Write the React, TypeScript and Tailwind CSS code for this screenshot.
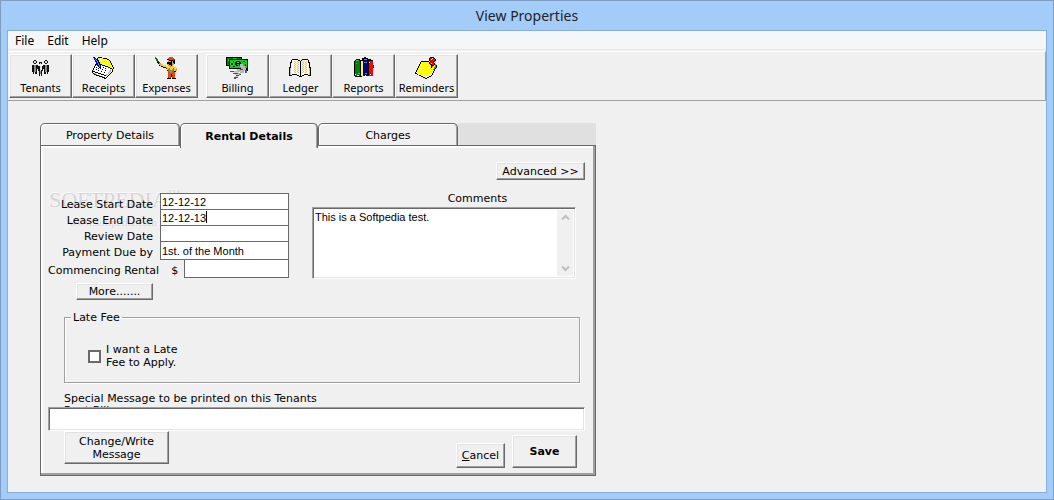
import { useState } from "react";
import type { ReactNode } from "react";
import clsx from "clsx";

const raised =
  "border border-t-white border-l-white border-r-[#696969] border-b-[#696969] bg-[#f0f0f0] shadow-[inset_-1px_-1px_#a0a0a0,inset_1px_1px_#e3e3e3]";
const sunken =
  "border border-t-[#a0a0a0] border-l-[#a0a0a0] border-r-white border-b-white bg-white shadow-[inset_1px_1px_#696969,inset_-1px_-1px_#e3e3e3]";
const fieldText = "font-['Liberation_Sans',sans-serif] text-[11px] text-black outline-none";

function Icon({ children }: { children: ReactNode }) {
  return (
    <svg
      className="h-6 w-[25px]"
      viewBox="0 0 25 24"
      shapeRendering="crispEdges"
      aria-hidden="true"
    >
      {children}
    </svg>
  );
}

// 16-colour style bitmaps, one letter per pixel
const palette: Record<string, string> = {
  k: "#000000",
  w: "#ffffff",
  y: "#ffff00",
  o: "#808000",
  g: "#808080",
  s: "#c0c0c0",
  b: "#0000d0",
  c: "#00b0f0",
  r: "#ff0000",
  e: "#e8480c",
  t: "#d29a5c",
  n: "#1c5c1c",
  a: "#f8d820",
  m: "#689a8c",
  p: "#fff4c8",
};

function PixelIcon({ rows }: { rows: string[] }) {
  return (
    <Icon>
      {rows.flatMap((row, y) =>
        row
          .split("")
          .map((ch, x) =>
            palette[ch] ? (
              <rect key={`${x}-${y}`} x={x + 1} y={y + 1} width="1" height="1" fill={palette[ch]} />
            ) : null
          )
      )}
    </Icon>
  );
}

const receiptRows = [
  ".bk...kkkk............",
  "..bb.kyywyykkkk.......",
  "..bcbkyyyyywyyykk.....",
  "...bcbkywyyyyyyyyk....",
  "...bbckyyyyyywyyyyk...",
  "....bcbkyyywyyyyyyk...",
  "....bbckyyyyyyywyyyk..",
  "...kkbcbkkyywyyyyyyk..",
  "...kwbbckwkkkyyywyyyk.",
  "..kwwwbcbwwwwkkkyyyyk.",
  "..kwkwwbkwwkwwwwkkyyyk",
  ".kwwwwkwkwwwwkwwwwkkyk",
  ".kwwkwwwwwkwwwwwwwswk.",
  "kwwwwwkwwwwwwkwwwwswk.",
  "kkkwwwwwwkwwwwwwwsswk.",
  "kwwkkkwwwwwwkwwwsswk..",
  ".kgwwwkkkwwwwwwwswk...",
  "..kkgwwwwkkkwwsswk....",
  "....kkkgwwwwkkswk.....",
  ".......kkkgwwwwk......",
  "..........kkkwk.......",
  "............kk........",
];

const expenseRows = [
  "n.............eeee....",
  "nn...........eeeeee...",
  ".nn.........kkeeeerr..",
  ".nn..........tkkkkrk..",
  "..nn.........tttktkk..",
  "..kkn.......kkkkktkk..",
  "...ktt......kkkkkttk..",
  "....ttaa....ttkkktt...",
  "....kttaaaa..tttkt....",
  "......kkaaaaaaattaa...",
  "........kkkaaaaaaaaaa.",
  "...........kaaeaaaeaat",
  "............aeeaameaat",
  "............kemmmmeatt",
  ".............emmmeekk.",
  ".............eemmeee..",
  ".............eeeeeee..",
  ".............eeekeee..",
  ".............eeekree..",
  ".............eeekeee..",
  ".............ree.ree..",
  "............kkkk.kkkk.",
];

const ledgerRows = [
  "......................",
  "......................",
  "...kkkkkk....kkkkkk...",
  "..kwpppppkk.kpppppwk..",
  "..kwpsppsppkppsppswk..",
  ".kkwppsppspkpsppspwkk.",
  ".kpwpsppsppkppsppswpk.",
  ".kpwppsppspkpsppspwpk.",
  ".kpwpsppsppkppsppswpk.",
  ".kpwppsppspkpsppspwpk.",
  "kkpwpsppsppkppsppswpkk",
  "kspwppsppspkpsppspwpsk",
  "kspwpsppsppkppsppswpsk",
  "kspwppsppspkpsppspwpsk",
  "kspwpsppsppkppsppswpsk",
  "kspwppsppspkpsppspwpsk",
  "kspwwwwwpppkpppwwwwpsk",
  "kswkkkkkwwpkpwwkkkkwsk",
  "kkk.....kkwkwkk....kkk",
  "..........kkk.........",
];

const reminderRows = [
  "...............kkkk...",
  "..............krrwrk..",
  "..............krwrrrk.",
  "..............krrrrrk.",
  "......kkkkkkkk.kkrkk..",
  ".....kyyyyyyyykrrrk...",
  ".....kyywyyyyykrwrrk..",
  "....kyyyyyyyyyykkrrko.",
  "....kywyyyyyyyyykkkyok",
  "...kyyyyyyyyyyyykoyyok",
  "...kyyyyyyyyyyyykyyook",
  "..kyywyyyyyyyyyyyyyok.",
  "..kyyyyyyyyyyyyyyyok..",
  ".kyywyyyyyyyyyyyyywk..",
  ".kyyyyyyyyyyyyyyyyk...",
  "kwyyyyyyyyyyyyyyywk...",
  "kkwyyyyyyyyyyyyyyk....",
  "..kwwyyyyyyyyyywwk....",
  "....kkwyyyyyyywwk.....",
  "......kkwwywwwkk......",
  "........kkwwkk........",
  "..........kk..........",
];

const TenantsIcon = (
  <Icon>
    <g fill="#111">
      <path d="M6 4h2v1h1v2H8v1H6V7H5V5h1zM17 4h2v1h1v2h-1v1h-2V7h-1V5h1zM11 6h3v2h-3z" />
      <path d="M4 9h2v7H4zM8 9h2v4H8zM5 10h1v8H5zM7 13h2v5H7zM15 9h2v4h-2zM19 9h2v7h-2zM16 13h2v5h-2zM19 13h1v5h-1z" />
      <path d="M10 10h2v5h-2zM14 10h1v5h-1zM11 14h1v6h-1zM13 14h1v6h-1z" />
    </g>
    <path fill="#ddd" d="M6 5h2v2H6zM17 5h2v2h-2zM12 7h1v1h-1zM12 10h1v5h-1z" />
    <path fill="#888" d="M6 9h2v7H6zM17 9h2v7h-2zM12 15h1v3h-1z" />
  </Icon>
);

const BillingIcon = (
  <Icon>
    <path fill="#000" d="M1 1h16v2h6v12h-9v-2H4v-3H1z" />
    <path fill="#008000" d="M2 2h14v1H4v6H2z" />
    <path fill="#00d818" d="M5 4h17v8H5zM3 3h1v2H3zM8 2h3v1H8z" />
    <path fill="#000" d="M8 5h1v1H8zM6 7h2v2H6zM11 5h4v1h1v4h-5V9h-1V6h1zM18 5h2v1h-2zM20 8h1v2h-1zM8 10h2v1H8zM17 10h2v1h-2z" />
    <path fill="#00d818" d="M12 6h2v1h-2zM12 8h2v1h-2z" />
    <path fill="#b8b8b8" d="M15 8h3v2h2v2h1v3h-2v2h-3v1h-3v-1h2v-1H6v-1h6v-2h4v-2h-1z" />
    <path fill="#555" d="M13 9h2v1h-2zM15 13h3v1h-3zM5 15h4v1H5zM8 17h5v1H8zM14 18h2v1h-2zM11 19h3v1h-3zM9 21h4v1h-2v1H9zM20 14h2v3h-2z" />
    <path fill="#c8c8c8" d="M9 16h4v1H9zM10 18h4v1h-4zM10 20h3v1h-3z" />
  </Icon>
);

const ReportsIcon = (
  <Icon>
    <path fill="#000" d="M4 4h1V3h4v1h2V2h2V1h2v1h2v1h3v1h2v5h1v3h-1v8H11v1H4v-1H3V5h1z" />
    <path fill="#008000" d="M4 5h5v15H4z" />
    <path fill="#5cb85c" d="M5 4h3v1H5zM5 7h1v1H5zM7 17h2v1H7z" />
    <path fill="#ff0" d="M10 5h2v15h-2z" />
    <path fill="#000090" d="M12 4h5v15h-4V6h-1z" />
    <path fill="#6878d8" d="M13 3h3v1h-3zM13 6h3v1h-3zM14 17h2v1h-2z" />
    <path fill="#f00" d="M18 5h4v15h-4z" />
    <path fill="#fff" d="M4 18h1v1H4zM6 19h2v1H6zM14 19h1v1h-1zM18 6h1v1h-1zM19 18h1v1h-1z" />
  </Icon>
);

const toolGroups = [
  [
    { label: "Tenants", icon: TenantsIcon },
    { label: "Receipts", icon: <PixelIcon rows={receiptRows} /> },
    { label: "Expenses", icon: <PixelIcon rows={expenseRows} /> },
  ],
  [
    { label: "Billing", icon: BillingIcon },
    { label: "Ledger", icon: <PixelIcon rows={ledgerRows} /> },
    { label: "Reports", icon: ReportsIcon },
    { label: "Reminders", icon: <PixelIcon rows={reminderRows} /> },
  ],
];

const tabs = [
  { id: "property", label: "Property Details", width: "w-[140px]" },
  { id: "rental", label: "Rental Details", width: "w-[138px]" },
  { id: "charges", label: "Charges", width: "w-[140px]" },
];

const fields = [
  { id: "lease-start", label: "Lease Start Date", value: "12-12-12", row: "h-4", box: "h-[17px]" },
  { id: "lease-end", label: "Lease End Date", value: "12-12-13", row: "h-4", box: "h-[17px]", caret: true },
  { id: "review", label: "Review Date", value: "", row: "h-4", box: "h-[17px]" },
  { id: "due", label: "Payment Due by", value: "1st. of the Month", row: "h-[18px]", box: "h-[19px]" },
];

function LeaseForm() {
  return (
    <div className="relative pt-px pl-[7px]">
      <div className="pointer-events-none absolute -top-1 left-2 font-['Liberation_Serif',serif] text-[#d6d6d6] [text-shadow:-1px_-1px_#fafafa]">
        <div className="flex items-start text-[22px] leading-6">
          SOFTPEDIA<span className="text-[8px] leading-3">TM</span>
        </div>
        <div className="pt-1 pl-5 text-[11px] leading-3">www.softpedia.com</div>
      </div>
      {fields.map((f) => (
        <div key={f.id} className={clsx("relative flex", f.row)}>
          <label htmlFor={f.id} className="w-[105px] pt-[5px] text-right">
            {f.label}
          </label>
          <input
            id={f.id}
            defaultValue={f.value}
            className={clsx(
              "ml-[7px] w-[129px] border border-[#696969] bg-white px-px",
              fieldText,
              f.box
            )}
          />
          {f.caret && <span className="absolute top-0.5 left-[158px] h-3 w-px bg-black" />}
        </div>
      ))}
      <div className="flex h-[19px]">
        <label htmlFor="rental" className="flex w-[136px] gap-3 pt-[5px] whitespace-nowrap">
          <span>Commencing Rental</span>
          <span>$</span>
        </label>
        <input
          id="rental"
          className={clsx("w-[105px] border border-[#696969] bg-white px-px", fieldText)}
        />
      </div>
      <button type="button" className={clsx("mt-[5px] ml-7 block h-[17px] w-[77px]", raised)}>
        More.......
      </button>
    </div>
  );
}

function Comments() {
  return (
    <div className="w-[264px]">
      <label htmlFor="comments" className="block pl-[67px] text-center">
        Comments
      </label>
      <div className={clsx("mt-0.5 flex h-[72px] p-0.5", sunken)}>
        <textarea
          id="comments"
          defaultValue="This is a Softpedia test."
          className={clsx("min-w-0 flex-1 resize-none py-px leading-[13px]", fieldText)}
        />
        <div className="flex w-4 flex-col items-center justify-between bg-[#f0f0f0] py-1">
          <svg className="h-[7px] w-[9px]" viewBox="0 0 9 7" aria-hidden="true">
            <path d="M1 5.5l3.5-3.5 3.5 3.5" fill="none" stroke="#bfbfbf" strokeWidth="2" />
          </svg>
          <svg className="h-[7px] w-[9px]" viewBox="0 0 9 7" aria-hidden="true">
            <path d="M1 1.5l3.5 3.5 3.5-3.5" fill="none" stroke="#bfbfbf" strokeWidth="2" />
          </svg>
        </div>
      </div>
    </div>
  );
}

export default function App() {
  const [active, setActive] = useState("rental");

  return (
    <div className="flex min-h-screen flex-col border border-[#7f9cc4] bg-[#a4ccf8] px-1.5 pb-1.5 font-['DejaVu_Sans',sans-serif] text-[11px] leading-[13px] text-black">
      <h1 className="h-[29px] text-center font-['Noto_Sans',sans-serif] text-[14px] leading-[29px] text-[#222]">
        View Properties
      </h1>

      <main className="flex-1 border border-[#8aaedb] bg-[#f0f0f0]">
        <nav className="flex h-[19px] gap-[13px] border-b border-[#e6e7e9] bg-[#f5f6f8] pl-[7px] font-['Noto_Sans',sans-serif] text-[12px]">
          <button type="button">File</button>
          <button type="button">Edit</button>
          <button type="button">Help</button>
        </nav>

        <div className="mt-px flex gap-2 border-t border-r border-b border-t-white border-r-[#a0a0a0] border-b-[#a0a0a0] py-0.5 pl-px">
          {toolGroups.map((group, i) => (
            <div key={i} className="flex">
              {group.map((tool) => (
                <button
                  key={tool.label}
                  type="button"
                  className={clsx(
                    "flex h-11 w-[63px] flex-col items-center pt-px font-['Noto_Sans',sans-serif] text-[11px] leading-4",
                    raised
                  )}
                >
                  {tool.icon}
                  {tool.label}
                </button>
              ))}
            </div>
          ))}
        </div>

        <section className="mt-[22px] ml-8 max-w-[556px]">
          <div role="tablist" className="flex h-[22px]">
            {tabs.map((tab) => (
              <button
                key={tab.id}
                type="button"
                role="tab"
                aria-selected={active === tab.id}
                onClick={() => setActive(tab.id)}
                className={clsx(
                  "rounded-t-[5px] border border-b-0 border-[#696969] bg-[#f0f0f0] shadow-[inset_1px_1px_white,inset_-1px_0_#a0a0a0]",
                  tab.width,
                  active === tab.id ? "relative z-10 h-[25px] font-bold" : "pt-px"
                )}
              >
                {tab.label}
              </button>
            ))}
            <div className="flex-1 bg-[#e0e0e0]" />
          </div>

          <div className="border border-[#696969] pb-[7px] shadow-[inset_-2px_-2px_#a0a0a0,inset_2px_2px_white]">
            <div className="flex justify-end pt-4 pr-2.5">
              <button type="button" className={clsx("h-[18px] w-[89px]", raised)}>
                Advanced &gt;&gt;
              </button>
            </div>

            <div className="mt-3 flex gap-[23px]">
              <LeaseForm />
              <Comments />
            </div>

            <fieldset className="mt-[11px] mr-[15px] ml-[23px] border border-[#a0a0a0] pb-[13px] shadow-[1px_1px_white,inset_1px_1px_white]">
              <legend className="ml-1.5 bg-[#f0f0f0] px-0.5">Late Fee</legend>
              <label className="flex w-[130px] items-center gap-[5px] pt-[19px] pl-[23px]">
                <input
                  type="checkbox"
                  className="h-[13px] w-[13px] shrink-0 appearance-none border-2 border-[#696969] bg-white checked:bg-[#696969]"
                />
                <span className="whitespace-nowrap">
                  I want a Late
                  <br />
                  Fee to Apply.
                </span>
              </label>
            </fieldset>

            {/* the message box sits over the label's second line */}
            <label
              htmlFor="message"
              className="mt-2.5 ml-[23px] block h-[14px] w-[280px] overflow-hidden leading-3"
            >
              Special Message to be printed on this Tenants
              <br />
              Rent Bill
            </label>
            <div className="mr-2.5 ml-[7px] flex">
              <input id="message" className={clsx("h-6 w-full px-1", fieldText, sunken)} />
            </div>

            <div className="mr-[18px] ml-[23px] flex h-[37px] items-end gap-[7px]">
              <button type="button" className={clsx("mr-auto h-[33px] w-[105px] self-start", raised)}>
                Change/Write
                <br />
                Message
              </button>
              <button type="button" className={clsx("h-[25px] w-[49px]", raised)}>
                <span className="underline">C</span>ancel
              </button>
              <button type="button" className={clsx("h-[33px] w-[65px] font-bold", raised)}>
                Save
              </button>
            </div>
          </div>
        </section>
      </main>
    </div>
  );
}
